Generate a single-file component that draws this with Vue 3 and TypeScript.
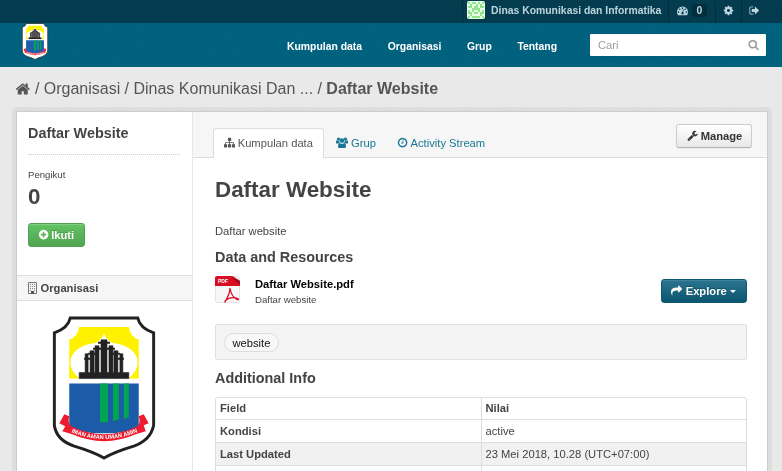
<script setup lang="ts">
interface Row { field: string; value: string }

const nav: string[] = ['Kumpulan data', 'Organisasi', 'Grup', 'Tentang']
const rows: Row[] = [
  { field: 'Kondisi', value: 'active' },
  { field: 'Last Updated', value: '23 Mei 2018, 10.28 (UTC+07:00)' },
  { field: '', value: '' },
]
// Cells of the avatar identicon that are painted green
const avatar: string[] = ['10110101', '01001010', '11011011', '00111100', '10100101', '11011011', '01000010', '10111101']
</script>

<template>
  <div class="page">
    <svg class="symbols" width="0" height="0" aria-hidden="true">
      <symbol id="crest" viewBox="0 0 104 145">
        <path d="M18 2H86Q88 12 102 17V110Q99 125 82 131Q62 137 52 143Q42 137 22 131Q4 125 2 110V17Q16 12 18 2Z" fill="#fff" stroke="#222" stroke-width="3" />
        <path d="M27 11H77Q78 20 87 24V63H77Q91 50 83 38Q77 29 60 27Q55 24 52 18Q49 24 44 27Q27 29 21 38Q13 50 27 63H17V24Q26 20 27 11Z" fill="#fff200" />
        <path d="M27 63V57H33V38H36V57H38V35H42V57H43V30H47V57H49V24H55V57H57V30H61V57H62V35H66V57H68V38H71V57H77V63Z" fill="#222" stroke="#222" stroke-width=".6" />
        <path d="M46 27H58M41 33H49M55 33H63M36 38H44M60 38H68M32 43H38M66 43H72" stroke="#222" stroke-width="2" />
        <path d="M17 68H87V112Q70 119 52 118Q34 119 17 112Z" fill="#1c5ba8" />
        <path d="M48 68H56V107H48ZM61 68H67V104L61 106ZM72 68H77V102L72 104Z" fill="#00a651" />
        <path d="M7 108L12 99L17 101Q15 108 19 111Q52 127 86 111Q89 107 87 101L92 99L97 108L92 110L94 116L84 119Q52 133 20 119L10 116L13 111Z" fill="#ed1c2e" />
        <path id="motto" d="M19 117Q52 131 87 116.500" fill="none" />
        <text class="motto"><textPath href="#motto">IMAN AMAN UMAN AMIN</textPath></text>
      </symbol>
    </svg>

    <header>
      <div class="account">
        <div class="acct user">
          <svg class="avatar" viewBox="0 0 18 18">
            <rect width="18" height="18" rx="2" fill="#e9ffe6" />
            <template v-for="(line, y) in avatar" :key="y">
              <template v-for="(cell, x) in line.split('')" :key="x">
                <rect v-if="cell === '1'" :x="1 + x * 2" :y="1 + y * 2" width="2" height="2" fill="#8be587" />
              </template>
            </template>
          </svg>
          <span>Dinas Komunikasi dan Informatika</span>
        </div>
        <div class="acct dash">
          <svg class="fa" viewBox="0 0 1792 1792"><path d="M384 1152q0-53-37.5-90.5t-90.500-37.500-90.500 37.500-37.500 90.500 37.500 90.500 90.500 37.500 90.500-37.500 37.500-90.500zm192-448q0-53-37.5-90.5t-90.5-37.5-90.5 37.5-37.5 90.5 37.5 90.5 90.5 37.500 90.5-37.5 37.5-90.5zm428 481l101-382q6-26-7.500-48.500t-38.500-29.500-48 6.500-30 39.500l-101 382q-60 5-107 43.500t-63 98.500q-20 77 20 146t117 89 146-20 89-117q16-60-6-117t-72-91zm660-33q0-53-37.500-90.500t-90.500-37.500-90.500 37.500-37.500 90.500 37.500 90.500 90.500 37.500 90.500-37.500 37.500-90.500zm-640-640q0-53-37.500-90.500t-90.500-37.500-90.500 37.500-37.500 90.500 37.500 90.500 90.500 37.500 90.500-37.500 37.500-90.500zm448 192q0-53-37.500-90.500t-90.500-37.500-90.500 37.500-37.500 90.500 37.500 90.500 90.500 37.500 90.500-37.500 37.500-90.500zm320 448q0 261-141 483-19 29-54 29h-1402q-35 0-54-29-141-221-141-483 0-182 71-348t191-286 286-191 348-71 348 71 286 191 191 286 71 348z" /></svg>
          <b class="count">0</b>
        </div>
        <div class="acct cog">
          <svg class="fa" viewBox="0 0 1792 1792"><path d="M1152 896q0-106-75-181t-181-75-181 75-75 181 75 181 181 75 181-75 75-181zm512-109v222q0 12-8 23t-20 13l-185 28q-19 54-39 91 35 50 107 138 10 12 10 25t-9 23q-27 37-99 108t-94 71q-12 0-26-9l-138-108q-44 23-91 38-16 136-29 186-7 28-36 28h-222q-14 0-24.500-8.500t-11.500-21.500l-28-184q-49-16-90-37l-141 107q-10 9-25 9-14 0-25-11-126-114-165-168-7-10-7-23 0-12 8-23 15-21 51-66.500t54-70.500q-27-50-41-99l-183-27q-13-2-21-12.500t-8-23.500v-222q0-12 8-23t19-13l186-28q14-46 39-92-40-57-107-138-10-12-10-24 0-10 9-23 26-36 98.500-107.500t94.500-71.500q13 0 26 10l138 107q44-23 91-38 16-136 29-186 7-28 36-28h222q14 0 24.500 8.500t11.500 21.500l28 184q49 16 90 37l142-107q9-9 24-9 13 0 25 10 129 119 165 170 7 8 7 22 0 12-8 23-15 21-51 66.500t-54 70.500q26 50 41 98l183 28q13 2 21 12.500t8 23.500z" /></svg>
        </div>
        <div class="acct out">
          <svg class="fa" viewBox="0 0 1792 1792"><path d="M704 1440q0 4 1 20t.5 26.500-3 23.500-10 19.500-20.500 6.500h-320q-119 0-203.500-84.500t-84.500-203.500v-704q0-119 84.500-203.500t203.500-84.500h320q13 0 22.500 9.500t9.500 22.500q0 4 1 20t.5 26.500-3 23.500-10 19.500-20.500 6.500h-320q-66 0-113 47t-47 113v704q0 66 47 113t113 47h312l11.500 1 11.500 3 8 5.500 7 9 2 13.500zm928-544q0 26-19 45l-544 544q-19 19-45 19t-45-19-19-45v-288h-448q-26 0-45-19t-19-45v-384q0-26 19-45t45-19h448v-288q0-26 19-45t45-19 45 19l544 544q19 19 19 45z" /></svg>
        </div>
      </div>
      <div class="masthead">
        <svg class="brand" viewBox="0 0 104 145"><use href="#crest" /></svg>
        <nav><a v-for="item in nav" :key="item">{{ item }}</a></nav>
        <div class="search">
          <span>Cari</span>
          <svg class="fa" viewBox="0 0 1792 1792"><path d="M1216 832q0-185-131.500-316.500t-316.500-131.500-316.500 131.500-131.500 316.500 131.500 316.500 316.500 131.500 316.500-131.500 131.500-316.500zm512 832q0 52-38 90t-90 38q-54 0-90-38l-343-342q-179 124-399 124-143 0-273.500-55.500t-225-150-150-225-55.500-273.500 55.500-273.500 150-225 225-150 273.500-55.500 273.500 55.500 225 150 150 225 55.500 273.500q0 220-124 399l343 343q37 37 37 90z" /></svg>
        </div>
      </div>
    </header>

    <div class="crumbs">
      <svg class="home" viewBox="0 0 1792 1792"><path d="M1472 992v480q0 26-19 45t-45 19h-384v-384h-256v384h-384q-26 0-45-19t-19-45v-480q0-1 .5-3t.5-3l575-474 575 474q1 2 1 6zm223-69l-62 74q-8 9-21 11h-3q-13 0-21-7l-692-577-692 577q-12 8-24 7-13-2-21-11l-62-74q-8-10-7-23.500t11-21.500l719-599q32-26 76-26t76 26l244 204v-195q0-14 9-23t23-9h192q14 0 23 9t9 23v408l219 182q10 8 11 21.500t-7 23.500z" /></svg>
      <span>/</span><span>Organisasi</span><span>/</span><span>Dinas Komunikasi Dan ...</span><span>/</span><b>Daftar Website</b>
    </div>

    <svg class="grain" aria-hidden="true">
      <filter id="grain"><feTurbulence type="fractalNoise" baseFrequency="0.45" numOctaves="2" seed="4" /><feColorMatrix values="0.33 0.33 0.33 0 0  0.33 0.33 0.33 0 0  0.33 0.33 0.33 0 0  0 0 0 0 1" /></filter>
      <rect width="100%" height="100%" filter="url(#grain)" />
    </svg>

    <div class="wrapper">
      <aside>
        <div class="info">
          <h2>Daftar Website</h2>
          <div class="follow">
            <small>Pengikut</small>
            <strong>0</strong>
          </div>
          <button class="btn green">
            <svg class="fa" viewBox="0 0 1792 1792"><path d="M1344 960v-128q0-26-19-45t-45-19h-256v-256q0-26-19-45t-45-19h-128q-26 0-45 19t-19 45v256h-256q-26 0-45 19t-19 45v128q0 26 19 45t45 19h256v256q0 26 19 45t45 19h128q26 0 45-19t19-45v-256h256q26 0 45-19t19-45zm320-64q0 209-103 385.500t-279.500 279.500-385.500 103-385.500-103-279.500-279.500-103-385.500 103-385.500 279.500-279.500 385.500-103 385.500 103 279.500 279.500 103 385.500z" /></svg>Ikuti
          </button>
        </div>
        <h3>
          <svg class="building" viewBox="0 0 9 12"><path d="M.5.5h8v11h-8z" fill="#f2f2f4" stroke="#857272" /><path d="M2 2.500h1M4 2.500h1M6 2.500h1M2 4.500h1M4 4.500h1M6 4.500h1M2 6.500h1M4 6.500h1M6 6.500h1M2 8.500h1M6 8.500h1" stroke="#7f8ba0" /><path d="M3 9h3v3h-3z" fill="#555" /></svg>Organisasi
        </h3>
        <svg class="crest" viewBox="0 0 104 145"><use href="#crest" /></svg>
      </aside>

      <main>
        <div class="tabs">
          <a class="tab active">
            <svg class="fa" viewBox="0 0 1792 1792"><path d="M1792 1248v320q0 40-28 68t-68 28h-320q-40 0-68-28t-28-68v-320q0-40 28-68t68-28h96v-192h-512v192h96q40 0 68 28t28 68v320q0 40-28 68t-68 28h-320q-40 0-68-28t-28-68v-320q0-40 28-68t68-28h96v-192h-512v192h96q40 0 68 28t28 68v320q0 40-28 68t-68 28h-320q-40 0-68-28t-28-68v-320q0-40 28-68t68-28h96v-192q0-52 38-90t90-38h512v-192h-96q-40 0-68-28t-28-68v-320q0-40 28-68t68-28h320q40 0 68 28t28 68v320q0 40-28 68t-68 28h-96v192h512q52 0 90 38t38 90v192h96q40 0 68 28t28 68z" /></svg>Kumpulan data
          </a>
          <a class="tab groups">
            <svg class="fa" viewBox="0 0 24 22"><circle cx="5" cy="4" r="3.300" /><circle cx="19" cy="4" r="3.300" /><circle cx="12" cy="7" r="4.600" /><path d="M0 12V9Q0 6.500 2 6.500Q4 8 6.200 7.500Q6.500 10 8 11.500Q6 11.500 5 13H2Q0 13 0 12ZM24 12V9Q24 6.500 22 6.500Q20 8 17.800 7.500Q17.500 10 16 11.500Q18 11.500 19 13H22Q24 13 24 12ZM4 19Q4 12 8 12Q12 15.500 16 12Q20 12 20 19Q20 22 17 22H7Q4 22 4 19Z" /></svg>Grup
          </a>
          <a class="tab stream">
            <svg class="fa" viewBox="0 0 1792 1792"><path d="M1024 544v448q0 14-9 23t-23 9h-320q-14 0-23-9t-9-23v-64q0-14 9-23t23-9h224v-352q0-14 9-23t23-9h64q14 0 23 9t9 23zm416 352q0-148-73-273t-198-198-273-73-273 73-198 198-73 273 73 273 198 198 273 73 273-73 198-198 73-273zm224 0q0 209-103 385.500t-279.500 279.500-385.500 103-385.500-103-279.500-279.500-103-385.500 103-385.500 279.500-279.500 385.500-103 385.500 103 279.500 279.500 103 385.500z" /></svg>Activity Stream
          </a>
          <button class="btn plain">
            <svg class="fa" viewBox="0 0 1792 1792"><path d="M448 1472q0-26-19-45t-45-19-45 19-19 45 19 45 45 19 45-19 19-45zm644-420l-682 682q-37 37-90 37-52 0-91-37l-106-108q-38-36-38-90 0-53 38-91l681-681q39 98 114.500 173.500t173.500 114.500zm634-435q0 39-23 106-47 134-164.500 217.500t-258.500 83.500q-185 0-316.500-131.500t-131.500-316.500 131.500-316.500 316.500-131.500q58 0 121.500 16.500t107.500 46.500q16 11 16 28t-16 28l-293 169v224l193 107q5-3 79-48.500t135.500-81 70.500-35.500q15 0 23.500 10t8.500 25z" /></svg>Manage
          </button>
        </div>
        <div class="content">
          <h1>Daftar Website</h1>
          <p>Daftar website</p>
          <h2>Data and Resources</h2>
          <div class="resource">
            <svg class="pdf" viewBox="0 0 25 27">
              <rect x=".5" y=".5" width="24" height="26" rx="2" fill="#f7f7f7" stroke="#e4e4e4" />
              <path d="M0 10V2Q0 0 2 0H17L25 5V10Z" fill="#d80f24" /><path d="M17 0L25 5V8Q20 7 17 0Z" fill="#a90d1c" />
              <text x="3" y="7" class="pdf-label">PDF</text>
              <path d="M15 12Q15 17 10.500 25Q9 27 10.500 24.500Q15 20 23 22.500Q24 24 22 23.500Q16 20 15 12Z" fill="none" stroke="#d80f24" stroke-width="1.300" />
            </svg>
            <div class="file"><b>Daftar Website.pdf</b><small>Daftar website</small></div>
            <button class="btn blue">
              <svg class="fa" viewBox="0 0 1792 1792"><path d="M1792 640q0 26-19 45l-512 512q-19 19-45 19t-45-19-19-45v-256h-224q-98 0-175.500 6t-154 21.500-133 42.500-105.500 69.500-80 101-48.500 138.500-17.500 181q0 55 5 123 0 6 2.500 23.500t2.500 26.500q0 15-8.500 25t-23.500 10q-16 0-28-17-7-9-13-22t-13.500-30-10.500-24q-127-285-127-451 0-199 53-333 162-403 875-403h224v-256q0-26 19-45t45-19 45 19l512 512q19 19 19 45z" /></svg>Explore<i class="caret"></i>
            </button>
          </div>
          <div class="tags"><span>website</span></div>
          <h2 class="extra">Additional Info</h2>
          <div class="table">
            <div class="row"><b>Field</b><b>Nilai</b></div>
            <div v-for="(row, i) in rows" :key="i" class="row"><b>{{ row.field }}</b><span>{{ row.value }}</span></div>
          </div>
        </div>
      </main>
    </div>
  </div>
</template>

<style>
body { margin: 0; overflow: hidden; }
</style>

<style scoped>
* { box-sizing: border-box; }
.page { position: relative; width: 782px; height: 471px; overflow: hidden; background: #e8e8e8; color: #444; font: 11.2px/16px "Liberation Sans", Arial, sans-serif; }
.symbols { position: absolute; }
.motto { font: bold 5.800px "Liberation Sans", Arial, sans-serif; fill: #fff; }
.fa { width: 11.2px; height: 11.2px; fill: currentColor; flex: none; }
.grain { position: absolute; left: 0; top: 0; width: 782px; height: 471px; opacity: .16; pointer-events: none; mix-blend-mode: soft-light; }
h1, h2, h3, p { margin: 0; }
small { font-size: 9.6px; }

.account { display: flex; justify-content: flex-end; height: 23px; padding-right: 16px; background: #03374a; color: #b7d3dc; font-size: 10.4px; font-weight: bold; }
.acct { display: flex; align-items: center; height: 23px; padding-bottom: 2px; border-left: 1px solid #022a38; }
.user { width: 206px; padding-left: 4px; gap: 6px; white-space: nowrap; }
.user span { line-height: 21px; }
.avatar { width: 18px; height: 18px; margin-top: -1px; }
.dash { width: 47px; padding-left: 8px; gap: 4px; }
.count { width: 15px; height: 13px; border-radius: 3px; background: #022a38; line-height: 13px; text-align: center; }
.cog { width: 26px; padding-left: 7px; }
.out { width: 25px; padding-left: 7px; }
.acct .fa { width: 11px; height: 11px; }

.masthead { display: flex; height: 44px; padding: 0 16px 0 21px; background: #005d7a; }
.brand { width: 28px; height: 37px; }
nav { display: flex; gap: 25.6px; margin-left: 238px; color: #fff; font-size: 10.4px; font-weight: bold; line-height: 47px; white-space: nowrap; }
.search { display: flex; align-items: center; justify-content: space-between; width: 176px; height: 22px; margin: 11px 0 0 auto; padding: 0 7px 0 8px; border-radius: 1px; background: #fff; color: #999; font-size: 11.2px; box-shadow: 0 0 1px #003647; }

.crumbs { display: flex; gap: 4.400px; height: 44px; padding-left: 15px; color: #505050; font-size: 16px; line-height: 43px; white-space: nowrap; }
.home { width: 15.500px; height: 16px; margin: 13.500px 0 0; fill: #505050; }

.wrapper { position: relative; display: flex; width: 752px; height: 370px; margin-left: 16px; border: 1px solid #ccc; border-radius: 2px 2px 0 0; background: #fff; box-shadow: 0 0 0 4px rgba(0, 0, 0, .05); }
aside { width: 176px; flex: none; border-right: 1px solid #e6e6e6; }
.info { height: 163px; padding: 11px 12px 0 11px; }
h2 { font-size: 14.4px; line-height: 20px; }
.info h2 { height: 32px; border-bottom: 1px dotted #ccc; }
.follow { display: flex; flex-direction: column; margin-top: 12px; }
.follow strong { font-size: 22.4px; line-height: 28px; }
.btn { display: flex; align-items: center; height: 24px; padding: 0; border: 1px solid; border-radius: 3px; font: bold 11.2px/22px "Liberation Sans", Arial, sans-serif; white-space: nowrap; }
.green { width: 57px; margin-top: 12px; padding-left: 9px; gap: 2px; border-color: #4fa14f; background: linear-gradient(#62c462, #51a351); color: #fff; text-shadow: 0 -1px 0 rgba(0, 0, 0, .25); box-shadow: inset 0 1px 0 rgba(255, 255, 255, .2); }
h3 { display: flex; align-items: center; height: 26px; padding-left: 11px; border: solid #ddd; border-width: 1px 0; background: #f6f6f6; font-size: 11.2px; gap: 3.500px; }
.building { width: 9px; height: 12px; }
.crest { display: block; width: 104px; height: 144px; margin: 15px 0 0 34.500px; }

main { flex: 1; }
.tabs { display: flex; height: 46px; padding: 16px 15px 0 20px; border-bottom: 1px solid #ddd; background: #f6f6f6; color: #187794; }
.tab { display: flex; align-items: center; gap: 3px; height: 29px; white-space: nowrap; }
.active { width: 111px; height: 30px; padding: 0 0 2px 9.500px; border: 1px solid #ddd; border-bottom: 0; border-radius: 3px 3px 0 0; background: #fff; color: #555; }
.groups { margin-left: 12px; }
.groups .fa { width: 12px; }
.stream { margin-left: 21px; gap: 2.500px; }
.plain { width: 76px; margin: -4px 0 0 auto; padding-left: 9.500px; gap: 3px; border-color: #ccc #ccc #b3b3b3; background: linear-gradient(#fff, #e8e8e8); color: #333; box-shadow: 0 1px 1px rgba(0, 0, 0, .05); }
.content { padding: 18px 20px 0 22px; }
h1 { font-size: 22.4px; line-height: 28px; }
.content p { margin-top: 19px; }
.content h2 { margin-top: 8px; }
.resource { display: flex; height: 57px; padding-top: 9px; }
.pdf { width: 25px; height: 27px; }
.pdf-label { font: bold 5px "Liberation Sans", Arial, sans-serif; fill: #fff; }
.file { display: flex; flex-direction: column; margin-left: 15px; }
.file b { color: #000; }
.blue { width: 86px; margin: 3px 0 0 auto; padding-left: 9px; gap: 3.500px; border-color: #0d5a74; background: linear-gradient(#2b7590, #0b566e); color: #fff; text-shadow: 0 -1px 0 rgba(0, 0, 0, .25); box-shadow: inset 0 1px 0 rgba(255, 255, 255, .1); }
.caret { border: 3px solid transparent; border-top-color: #fff; border-bottom: 0; }
.tags { height: 36px; padding: 8px; border: 1px solid #e0e0e0; border-radius: 2px; background: #f4f4f4; color: #111; }
.tags span { display: inline-block; height: 19px; padding: 0 8px 0 7.500px; border: 1px solid #ddd; border-radius: 10px; background: #f8f8f8; line-height: 19px; }
.content .extra { margin-top: 8px; }
.table { margin-top: 9px; border: 1px solid #ddd; border-radius: 3px 3px 0 0; }
.row { display: grid; grid-template-columns: 265px 1fr; height: 23px; border-top: 1px solid #ddd; line-height: 22px; }
.row:first-child { height: 21px; border-top: 0; line-height: 20px; }
.row:nth-child(3) { background: #f1f1f1; }
.row > * { padding-left: 4px; }
.row > :last-child { padding-left: 3.500px; border-left: 1px solid #ddd; }
</style>
